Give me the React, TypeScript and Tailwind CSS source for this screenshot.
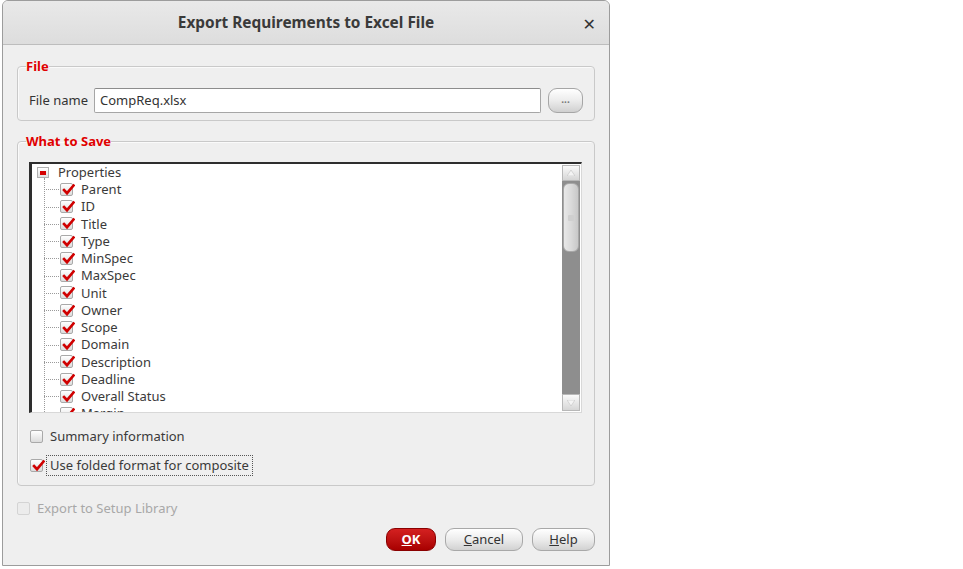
import React from 'react';

const FONT = { fontFamily: '"Noto Sans", "Open Sans", "DejaVu Sans", sans-serif' };

const PROPERTIES = [
  'Parent',
  'ID',
  'Title',
  'Type',
  'MinSpec',
  'MaxSpec',
  'Unit',
  'Owner',
  'Scope',
  'Domain',
  'Description',
  'Deadline',
  'Overall Status',
  'Margin',
];

function Check({ checked, disabled }: { checked?: boolean; disabled?: boolean }) {
  return (
    <span
      className={`relative inline-flex h-[13px] w-[13px] shrink-0 items-center justify-center rounded-[2px] border ${
        disabled
          ? 'border-[#d4d4d4] bg-[#ececec]'
          : 'border-[#a9a9a9] bg-gradient-to-b from-white to-[#dcdcdc]'
      }`}
    >
      {checked && (
        <svg viewBox="0 0 13 13" className="absolute left-[1px] top-[-1px] h-[13px] w-[13px]">
          <path d="M2 7 L5 10.2 L11.5 2.5" fill="none" stroke="#d00000" strokeWidth="2.6" strokeLinecap="square" />
        </svg>
      )}
    </span>
  );
}

function Button({ children, primary, w }: { children: React.ReactNode; primary?: boolean; w: string }) {
  return (
    <button
      className={`flex h-[23px] ${w} items-center justify-center rounded-[9px] border text-[13px] ${
        primary
          ? 'border-[#8a0000] bg-gradient-to-b from-[#d42020] to-[#a80000] font-bold text-white'
          : 'border-[#a8a8a8] bg-gradient-to-b from-white via-[#ececec] to-[#d2d2d2] text-[#333]'
      }`}
    >
      {children}
    </button>
  );
}

export default function App() {
  return (
    <div className="flex h-[569px] w-[963px] bg-white" style={FONT}>
      <div className="ml-[2px] flex h-[566px] w-[608px] flex-col overflow-hidden rounded-t-[6px] border border-[#9c9c9c] bg-[#efefef]">
        {/* Title bar */}
        <div className="relative flex h-[44px] shrink-0 items-center justify-center border-b border-[#bdbdbd] bg-gradient-to-b from-[#e9e9e9] to-[#dddddd]">
          <span className="text-[15.4px] font-bold text-[#3a3a3a]">Export Requirements to Excel File</span>
          <span className="absolute right-[13px] top-[11px] text-[16px] font-bold text-[#333]">✕</span>
        </div>

        <div className="flex flex-1 flex-col px-[14px]">
          {/* File */}
          <fieldset className="mt-[13px] rounded-[4px] border border-[#c9c9c9] px-[11px] pb-[7px] shadow-[inset_1px_1px_0_#fafafa]">
            <legend className="ml-[-3px] text-[13px] font-bold leading-[16px] text-[#e00000]">File</legend>
            <div className="mt-[14px] flex items-center">
              <span className="w-[65px] text-[13px] text-[#333]">File name</span>
              <div className="flex h-[25px] w-[447px] items-center rounded-[2px] border border-[#a6a6a6] border-t-[#8c8c8c] bg-white pl-[5px] text-[13px] text-[#333]">
                CompReq.xlsx
              </div>
              <button className="ml-[7px] flex h-[25px] w-[35px] items-center justify-center rounded-[9px] border border-[#a6a6a6] bg-gradient-to-b from-white via-[#ececec] to-[#d0d0d0] pb-[3px] text-[10px] font-bold leading-none text-[#777]">
                ...
              </button>
            </div>
          </fieldset>

          {/* What to Save */}
          <fieldset className="mt-[12px] rounded-[4px] border border-[#c9c9c9] px-[11px] pb-[9px] shadow-[inset_1px_1px_0_#fafafa]">
            <legend className="ml-[-3px] text-[13px] font-bold leading-[16px] text-[#e00000]">What to Save</legend>
            <div className="mt-[13px] flex h-[251px] w-[553px] border-l-[3px] border-t-[2px] border-b border-r border-[#2e2e2e] border-b-[#d8d8d8] border-r-[#d8d8d8] bg-white">
              <div className="relative flex-1 overflow-hidden pl-[5px] pt-[0px]">
                {/* vertical tree line */}
                <div className="absolute left-[12px] top-[14px] bottom-0 border-l border-dotted border-[#9a9a9a]" />
                <div className="flex h-[17.25px] items-center">
                  <span className="relative flex h-[11px] w-[12px] items-center justify-center border border-[#b0b0b0] bg-gradient-to-b from-white to-[#e0e0e0]">
                    <span className="h-[4px] w-[6px] bg-[#d40000]" />
                  </span>
                  <span className="ml-[9px] text-[13px] text-[#3a3a3a]">Properties</span>
                </div>
                {PROPERTIES.map((p) => (
                  <div key={p} className="flex h-[17.25px] items-center">
                    <span className="ml-[7px] w-[15px] border-t border-dotted border-[#9a9a9a]" />
                    <span className="ml-[1px]">
                      <Check checked />
                    </span>
                    <span className="ml-[8px] text-[13px] text-[#3a3a3a]">{p}</span>
                  </div>
                ))}
              </div>
              {/* Scrollbar */}
              <div className="my-[1px] mr-[1px] flex w-[18px] flex-col bg-[#8e8e8e]">
                <div className="flex h-[16px] items-center justify-center border border-[#b8b8b8] bg-gradient-to-b from-[#fafafa] to-[#d6d6d6]">
                  <svg viewBox="0 0 8 6" className="h-[6px] w-[8px]">
                    <path d="M0 6 L4 0 L8 6 Z" fill="#f4f4f4" stroke="#c4c4c4" strokeWidth="0.6" />
                  </svg>
                </div>
                <div className="mx-[1px] mt-[2px] flex h-[69px] items-center justify-center rounded-[6px] border border-[#a8a8a8] bg-gradient-to-r from-[#e8e8e8] via-[#dadada] to-[#c8c8c8]">
                  <span className="h-[6px] w-[6px] rounded-[1px] bg-[#cfcfcf]" />
                </div>
                <div className="flex-1" />
                <div className="flex h-[17px] items-center justify-center border border-[#b8b8b8] bg-gradient-to-b from-[#fafafa] to-[#d6d6d6]">
                  <svg viewBox="0 0 8 6" className="h-[6px] w-[8px]">
                    <path d="M0 0 L4 6 L8 0 Z" fill="#f4f4f4" stroke="#c4c4c4" strokeWidth="0.6" />
                  </svg>
                </div>
              </div>
            </div>

            <div className="mt-[15px] flex h-[17px] items-center pl-[1px]">
              <Check />
              <span className="ml-[7px] text-[13px] text-[#3a3a3a]">Summary information</span>
            </div>
            <div className="mt-[10px] flex h-[21px] items-center pl-[1px]">
              <Check checked />
              <span className="ml-[3px] flex h-[21px] items-center border border-dotted border-[#555] px-[3px] text-[13px] text-[#3a3a3a]">
                Use folded format for composite
              </span>
            </div>
          </fieldset>

          {/* Export to Setup Library */}
          <div className="mt-[14px] flex h-[17px] items-center">
            <Check disabled />
            <span className="ml-[7px] text-[13px] text-[#a8a8a8]">Export to Setup Library</span>
          </div>

          {/* Buttons */}
          <div className="mt-[11px] flex justify-end gap-[9px]">
            <Button primary w="w-[50px]">
              <span className="underline">O</span>K
            </Button>
            <Button w="w-[78px]">
              <span className="underline">C</span>ancel
            </Button>
            <Button w="w-[63px]">
              <span className="underline">H</span>elp
            </Button>
          </div>
        </div>
      </div>
    </div>
  );
}
